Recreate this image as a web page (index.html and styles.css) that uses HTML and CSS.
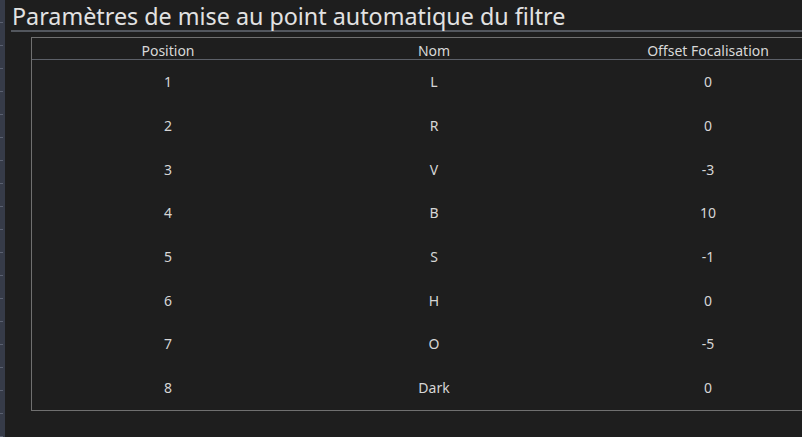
FILE: index.html
```html
<!DOCTYPE html>
<html lang="fr">
<head>
<meta charset="utf-8">
<title>Paramètres de mise au point automatique du filtre</title>
<link rel="stylesheet" href="styles.css">
</head>
<body>
<div class="app">
  <div class="strip"></div>
  <main class="main">
    <h1 class="title">Paramètres de mise au point automatique du filtre</h1>
    <div class="table">
      <div class="row head">
        <div class="cell">Position</div>
        <div class="cell">Nom</div>
        <div class="cell">Offset Focalisation</div>
      </div>
      <div class="row"><div class="cell">1</div><div class="cell">L</div><div class="cell">0</div></div>
      <div class="row"><div class="cell">2</div><div class="cell">R</div><div class="cell">0</div></div>
      <div class="row"><div class="cell">3</div><div class="cell">V</div><div class="cell">-3</div></div>
      <div class="row"><div class="cell">4</div><div class="cell">B</div><div class="cell">10</div></div>
      <div class="row"><div class="cell">5</div><div class="cell">S</div><div class="cell">-1</div></div>
      <div class="row"><div class="cell">6</div><div class="cell">H</div><div class="cell">0</div></div>
      <div class="row"><div class="cell">7</div><div class="cell">O</div><div class="cell">-5</div></div>
      <div class="row"><div class="cell">8</div><div class="cell">Dark</div><div class="cell">0</div></div>
    </div>
  </main>
</div>
</body>
</html>
```
FILE: styles.css
```css
html, body {
  margin: 0;
  padding: 0;
  background: #1e1e1e;
  overflow: hidden;
}
.app {
  display: flex;
  width: 802px;
  height: 437px;
  overflow: hidden;
  font-family: "Noto Sans", "Open Sans", sans-serif;
  color: #d6d6d6;
}
.strip {
  width: 5px;
  flex: none;
  background:
    repeating-linear-gradient(to bottom, transparent 0 22px, #5a6070 22px 23px) left top / 3px 100% no-repeat,
    #363b48;
}
.main {
  flex: 1;
  min-width: 0;
  overflow: hidden;
  padding-left: 6px;
}
.title {
  margin: 0;
  padding: 2px 0 0 1px;
  height: 28px;
  font-size: 23.3px;
  font-weight: 400;
  line-height: 29px;
  color: #e2e2e2;
  border-bottom: 2px solid #53575e;
  white-space: nowrap;
}
.table {
  margin: 5px 0 0 20px;
  width: 820px;
  border: 1px solid #707070;
  border-right: none;
}
.row {
  display: grid;
  grid-template-columns: 272px 260px 288px;
  height: 43.7px;
  align-items: center;
  font-size: 14px;
}
.row.head {
  height: 22px;
  padding-top: 3px;
  box-sizing: border-box;
  border-bottom: 1px solid #5c6068;
  color: #d8d8d8;
}
.cell {
  text-align: center;
}
```
